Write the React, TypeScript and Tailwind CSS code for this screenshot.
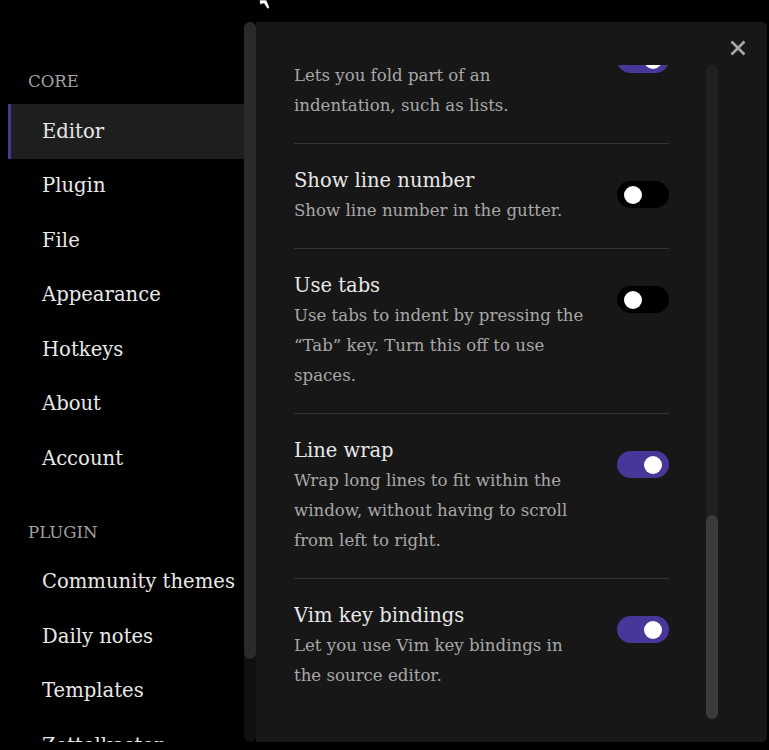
import React from "react";

const serif = { fontFamily: '"DejaVu Serif", "Liberation Serif", serif' };

function Toggle({ on }: { on: boolean }) {
  return (
    <div
      className={`mt-[15px] flex h-[27px] w-[52px] shrink-0 items-center rounded-full px-[7px] ${
        on ? "justify-end bg-[#483699]" : "justify-start bg-black"
      }`}
    >
      <div className="h-[18px] w-[18px] rounded-full bg-white" />
    </div>
  );
}

function Row({
  title,
  lines,
  on,
  last,
}: {
  title: string;
  lines: string[];
  on: boolean;
  last?: boolean;
}) {
  return (
    <div
      className={`flex items-start justify-between gap-4 py-[22px] ${
        last ? "" : "border-b border-[#333333]"
      }`}
    >
      <div className="min-w-0 flex-1">
        <div className="text-[19.5px] leading-[30px] text-[#e8e8e8]">{title}</div>
        <div className="text-[16.6px] leading-[30px] text-[#a8a8a8]">
          {lines.map((l, i) => (
            <div key={i} className="whitespace-nowrap">
              {l}
            </div>
          ))}
        </div>
      </div>
      <Toggle on={on} />
    </div>
  );
}

function NavItem({ label, active }: { label: string; active?: boolean }) {
  return (
    <div
      className={`flex h-[54.5px] items-center border-l-[3px] pl-[31px] text-[19.6px] text-[#e8e8e8] ${
        active ? "border-[#483699] bg-[#1e1e1e]" : "border-transparent"
      }`}
    >
      {label}
    </div>
  );
}

export default function App() {
  return (
    <div className="relative h-[750px] w-[769px] overflow-hidden bg-black" style={serif}>
      <svg
        className="absolute left-[259px] top-0"
        width="12"
        height="11"
        viewBox="0 0 12 11"
      >
        <polygon points="0.5,0 7.5,0 10.5,7.5 8.5,9 5,3.5 1,4.5" fill="#ffffff" stroke="#000" strokeWidth="0.6" />
      </svg>
      <div className="flex h-[742px] pr-[2px] pt-[22px]">
        {/* Sidebar */}
        <div className="h-full w-[244px] shrink-0 overflow-hidden pl-[8px]">
          <div className="ml-[20px] mt-[48px] mb-[10px] h-[24px] text-[16.6px] leading-[24px] text-[#a0a0a0]">
            CORE
          </div>
          <NavItem label="Editor" active />
          <NavItem label="Plugin" />
          <NavItem label="File" />
          <NavItem label="Appearance" />
          <NavItem label="Hotkeys" />
          <NavItem label="About" />
          <NavItem label="Account" />
          <div className="ml-[20px] mt-[35px] mb-[10px] h-[24px] text-[16.6px] leading-[24px] text-[#a0a0a0]">
            PLUGIN
          </div>
          <NavItem label="Community themes" />
          <NavItem label="Daily notes" />
          <NavItem label="Templates" />
          <NavItem label="Zettelkasten" />
        </div>
        {/* Sidebar scrollbar */}
        <div className="flex h-full w-[12px] shrink-0 flex-col rounded-[6px] bg-[#101010]">
          <div className="h-[637px] w-full rounded-[6px] bg-[#2a2a2a]" />
        </div>
        {/* Main panel */}
        <div className="relative flex h-full flex-1 rounded-r-[5px] bg-[#171717] pl-[38px] pt-[43px]">
          <button className="absolute right-[21px] top-[18px] flex h-[16px] w-[16px] items-center justify-center">
            <svg width="16" height="16" viewBox="0 0 16 16">
              <path d="M1.5 1.5 L14.5 14.5 M14.5 1.5 L1.5 14.5" stroke="#a8a8a8" strokeWidth="2.6" strokeLinecap="butt" />
            </svg>
          </button>
          <div className="h-[654px] w-[375px] shrink-0 overflow-hidden">
            <div className="mt-[-56px]">
              <Row
                title="Fold indent"
                lines={["Lets you fold part of an", "indentation, such as lists."]}
                on
              />
              <Row title="Show line number" lines={["Show line number in the gutter."]} on={false} />
              <Row
                title="Use tabs"
                lines={[
                  "Use tabs to indent by pressing the",
                  "\u201CTab\u201D key. Turn this off to use",
                  "spaces.",
                ]}
                on={false}
              />
              <Row
                title="Line wrap"
                lines={[
                  "Wrap long lines to fit within the",
                  "window, without having to scroll",
                  "from left to right.",
                ]}
                on
              />
              <Row
                title="Vim key bindings"
                lines={["Let you use Vim key bindings in", "the source editor."]}
                on
                last
              />
            </div>
          </div>
          <div className="ml-[37px] flex h-[654px] w-[12px] shrink-0 flex-col justify-end rounded-full bg-[#1f1f1f]">
            <div className="h-[204px] w-full rounded-full bg-[#3a3a3a]" />
          </div>
        </div>
      </div>
    </div>
  );
}
